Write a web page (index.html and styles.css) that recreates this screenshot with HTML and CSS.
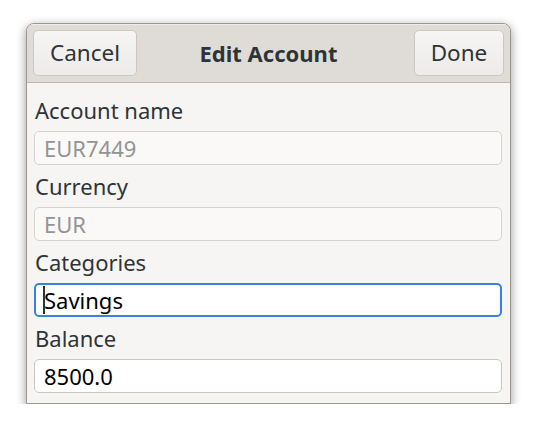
FILE: index.html
```html
<!DOCTYPE html>
<html>
<head>
<meta charset="utf-8">
<link rel="stylesheet" href="styles.css">
</head>
<body>
<div class="window">
  <div class="header">
    <div class="start"><button class="btn btn-cancel">Cancel</button></div>
    <div class="title">Edit Account</div>
    <div class="end"><button class="btn btn-done">Done</button></div>
  </div>
  <div class="content">
    <label class="label">Account name</label>
    <div class="entry disabled">EUR7449</div>
    <label class="label">Currency</label>
    <div class="entry disabled">EUR</div>
    <label class="label">Categories</label>
    <div class="entry focused"><span class="cursor"></span>Savings</div>
    <label class="label">Balance</label>
    <div class="entry">8500.0</div>
  </div>
</div>
</body>
</html>
```

FILE: styles.css
```css
* { box-sizing: border-box; }
html, body { margin: 0; padding: 0; background: #ffffff; }
body {
  font-family: "Noto Sans", "DejaVu Sans", sans-serif;
  color: #2e3436;
  padding: 23px 0 0 26px;
}
.window {
  width: 485px;
  height: 381px;
  border: 1px solid #9a9691;
  border-radius: 8px 8px 0 0;
  background: #f6f5f4;
  box-shadow: 0 3px 10px 1px rgba(0,0,0,0.35);
  overflow: hidden;
  display: flex;
  flex-direction: column;
}
.header {
  display: grid;
  grid-template-columns: 1fr auto 1fr;
  align-items: center;
  padding: 6px;
  background: #dfdcd8;
  border-bottom: 1px solid #bdb7b0;
  box-shadow: inset 0 1px rgba(255,255,255,0.5);
}
.start { display: flex; justify-content: flex-start; }
.end { display: flex; justify-content: flex-end; }
.btn {
  height: 46px;
  font-family: inherit;
  font-size: 22.5px;
  color: #2e3436;
  background: linear-gradient(#f6f5f4, #edebe9);
  border: 1px solid #cdc7c2;
  border-radius: 5px;
  padding: 0;
  line-height: 1;
}
.btn-cancel { width: 104px; }
.btn-done { width: 90px; }
.title {
  font-size: 22px;
  font-weight: bold;
  color: #2e3436;
}
.content {
  display: flex;
  flex-direction: column;
  gap: 6px;
  padding: 12px 8px 10px 7px;
}
.label {
  font-size: 22px;
  line-height: 30px;
  height: 30px;
  padding-left: 1px;
}
.entry {
  height: 34px;
  border: 1px solid #cdc7c2;
  border-radius: 5px;
  background: #ffffff;
  font-size: 22px;
  line-height: 32px;
  padding-left: 9px;
  color: #000000;
  position: relative;
}
.entry.disabled {
  background: #faf9f8;
  border-color: #d6d1cd;
  color: #929595;
}
.entry.focused {
  border: 2px solid #3584e4;
  line-height: 30px;
  padding-left: 8px;
}
.cursor {
  position: absolute;
  left: 7px;
  top: 1px;
  width: 2px;
  height: 28px;
  background: #2e3436;
}
```
